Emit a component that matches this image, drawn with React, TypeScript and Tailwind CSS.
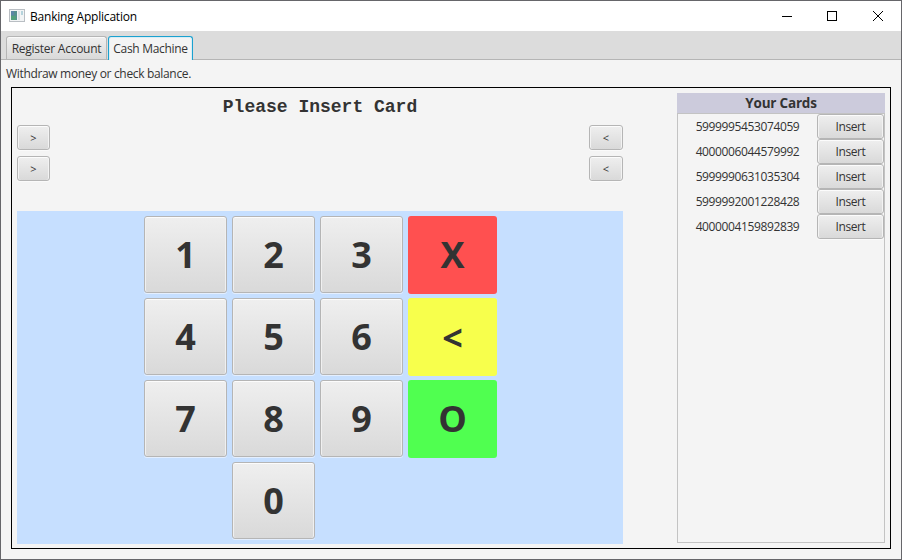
import React from 'react';

const cards = [
  '5999995453074059',
  '4000006044579992',
  '5999990631035304',
  '5999992001228428',
  '4000004159892839',
];

const face =
  'rounded-[3px] border border-[#b5b5b5] bg-linear-to-b from-[#efefef] to-[#d9d9d9] flex items-center justify-center';

function SideButton({ label, className }: { label: string; className: string }) {
  return (
    <button
      className={`${face} ${className} h-[25px] leading-none shadow-[inset_0_1px_0_#fcfcfc,inset_1px_0_0_#f3f3f3,inset_-1px_0_0_#f3f3f3,0_1px_0_#fafafa]`}
    >
      {label}
    </button>
  );
}

function Key({ label, className = '' }: { label: string; className?: string }) {
  return (
    <button
      className={`${face} ${className} h-[77px] w-[83px] pt-px text-[36px] leading-none font-bold shadow-[inset_0_1px_0_#fcfcfc,inset_1px_0_0_#f0f0f0,inset_-1px_0_0_#f0f0f0,0_1px_0_#e4efff]`}
    >
      {label}
    </button>
  );
}

function ActionKey({ label, className }: { label: string; className: string }) {
  return (
    <button
      className={`${className} flex h-[78px] w-[89px] items-center justify-center rounded-[3px] text-[36px] leading-none font-bold`}
    >
      {label}
    </button>
  );
}

export default function App() {
  return (
    <div className="flex h-[560px] w-[902px] flex-col overflow-hidden border border-[#66666a] bg-[#f4f4f4] font-['Open_Sans','Noto_Sans',sans-serif] text-[12px] text-[#333]">
      <header className="flex h-[30px] shrink-0 items-center bg-white text-black">
        <svg className="mb-px ml-2 shrink-0" width="16" height="13" viewBox="0 0 16 13" shapeRendering="crispEdges">
          <rect width="16" height="13" fill="#b9bec3" />
          <rect x="1" y="1" width="14" height="11" fill="#f2f4f5" />
          <rect x="2" y="2" width="6" height="9" fill="#56908f" />
          <rect x="2" y="2" width="3" height="4" fill="#5d87a6" />
          <rect x="2" y="7" width="5" height="4" fill="#54a07c" />
          <rect x="9" y="2" width="2" height="9" fill="#dde2e5" />
          <rect x="12" y="2" width="2" height="4" fill="#b5d3dc" />
        </svg>
        <span className="ml-[5px] flex-1 pt-px tracking-[-0.2px]">Banking Application</span>
        <svg className="mr-[17px] shrink-0" width="102" height="12" viewBox="0 0 102 12" fill="none" stroke="#000">
          <path d="M0 6.5H10M45.5 1.5h9v9h-9z" shapeRendering="crispEdges" />
          <path d="M91 1l10 10M101 1L91 11" />
        </svg>
      </header>

      <nav className="flex h-[29px] shrink-0 items-end border-b border-[#b5b5b5] bg-[#dcdcdc] pl-[5px]">
        <div className="flex h-[23px] w-[101px] items-center justify-center rounded-t-[3px] border border-b-0 border-[#b5b5b5] bg-linear-to-b from-[#efefef] to-[#d9d9d9] pt-px tracking-[-0.25px] whitespace-nowrap shadow-[inset_0_1px_0_#fafafa]">
          Register Account
        </div>
        <div className="-mb-px ml-px flex h-6 w-[85px] items-center justify-center rounded-t-[3px] border border-b-0 border-[#1ba1cf] bg-[#f4f4f4] tracking-[-0.32px] whitespace-nowrap shadow-[inset_0_1px_0_#d8edf5,inset_1px_0_0_#d8edf5,inset_-1px_0_0_#d8edf5]">
          Cash Machine
        </div>
      </nav>

      <main className="flex flex-1 flex-col px-[10px] pb-[10px]">
        <p className="-ml-[5px] h-[27px] pt-[5px] leading-[18px] tracking-[-0.33px]">
          Withdraw money or check balance.
        </p>

        <div className="flex flex-1 justify-between border border-black p-[5px] pb-1">
          <section className="flex w-[606px] flex-col">
            <h1 className="h-8 text-center font-['Courier_New','Liberation_Mono',monospace] text-[18px] leading-[29px] font-bold">
              Please Insert Card
            </h1>
            <div className="flex h-[86px] justify-between">
              <div className="flex flex-col gap-[6px]">
                <SideButton label=">" className="w-[33px] text-[11px]" />
                <SideButton label=">" className="w-[33px] text-[11px]" />
              </div>
              <div className="flex flex-col gap-[6px]">
                <SideButton label="<" className="w-[34px] text-[11px]" />
                <SideButton label="<" className="w-[34px] text-[11px]" />
              </div>
            </div>
            <div className="grid h-[333px] grid-cols-[83px_83px_83px_89px] grid-rows-[77px_77px_77px_77px] gap-[5px] bg-[#c6dfff] pt-[5px] pl-[127px]">
              <Key label="1" />
              <Key label="2" />
              <Key label="3" />
              <ActionKey label="X" className="bg-[#ff5050]" />
              <Key label="4" />
              <Key label="5" />
              <Key label="6" />
              <ActionKey label="<" className="bg-[#f7ff4c] pt-0.5" />
              <Key label="7" />
              <Key label="8" />
              <Key label="9" />
              <ActionKey label="O" className="bg-[#50ff50]" />
              <Key label="0" className="col-start-2" />
            </div>
          </section>

          <aside className="flex h-[450px] w-[208px] flex-col">
            <h2 className="h-5 bg-[#cccbdc] text-center text-[13.5px] leading-[21px] font-bold tracking-[-0.2px]">
              Your Cards
            </h2>
            <ul className="flex-1 border border-[#c3c3c3]">
              {cards.map((card) => (
                <li key={card} className="flex h-[25px] items-center justify-between">
                  <span className="w-[139px] pt-px text-center tracking-[-0.38px]">{card}</span>
                  <SideButton label="Insert" className="w-[67px] pt-px text-[12px] tracking-[-0.4px]" />
                </li>
              ))}
            </ul>
          </aside>
        </div>
      </main>
    </div>
  );
}
